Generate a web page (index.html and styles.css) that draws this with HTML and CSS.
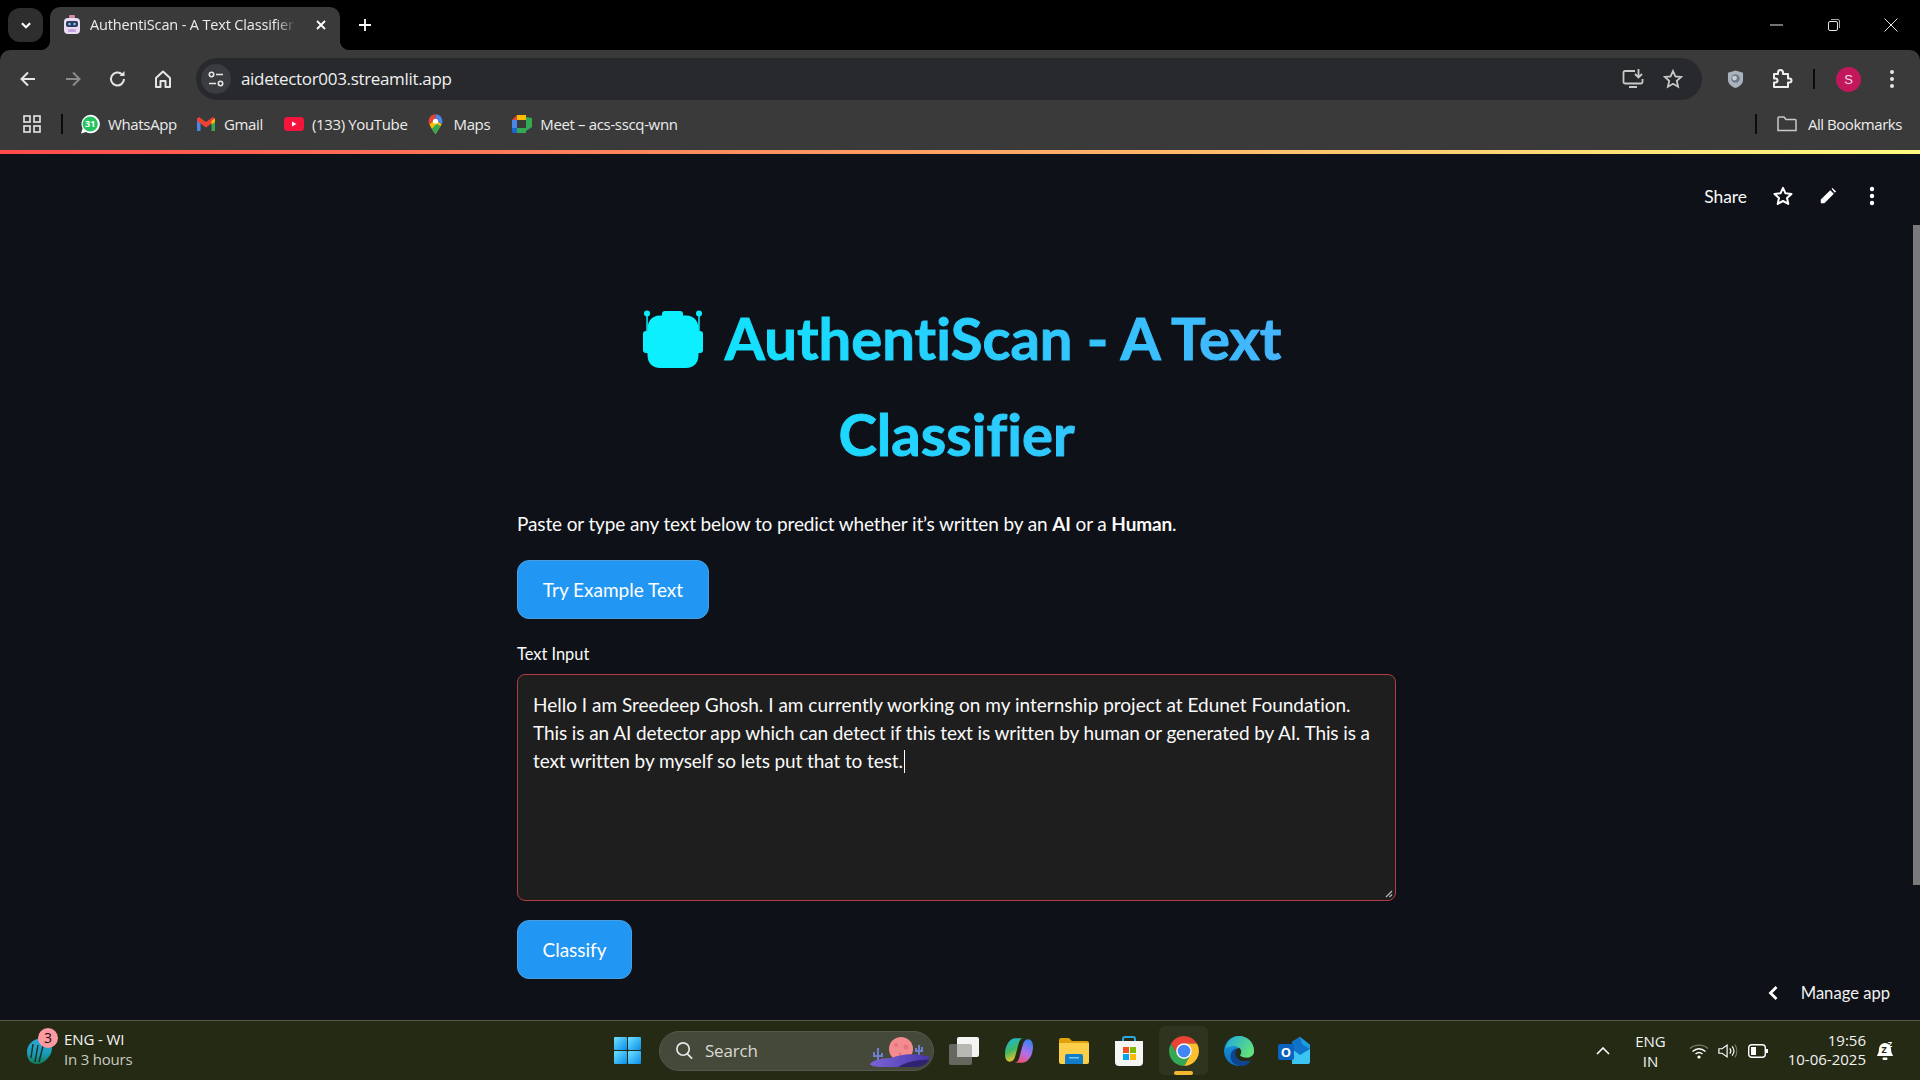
FILE: index.html
```html
<!DOCTYPE html>
<html lang="en">
<head>
<meta charset="utf-8">
<title>AuthentiScan - A Text Classifier</title>
<link rel="stylesheet" href="styles.css">
</head>
<body>
<div class="tabstrip">
  <div class="tabsearch"><svg viewBox="0 0 12 12" class="ic12"><path d="M2.5 4.5 6 8l3.5-3.5" fill="none" stroke="#fff" stroke-width="1.8"/></svg></div>
  <div class="tab">
    <svg class="favicon" viewBox="0 0 18 20"><rect x="6" y="0" width="6" height="3" rx="1" fill="#d98aa8"/><rect x="1" y="3" width="16" height="16" rx="4" fill="#e9dcf2"/><rect x="3" y="6" width="12" height="6" rx="2" fill="#2c3a5e"/><circle cx="6.5" cy="9" r="1.2" fill="#7fd0f5"/><circle cx="11.5" cy="9" r="1.2" fill="#7fd0f5"/><rect x="5" y="14" width="8" height="3" rx="1" fill="#c6a6e0"/></svg>
    <span class="tabtitle">AuthentiScan - A Text Classifier</span>
    <svg class="tabclose" viewBox="0 0 12 12"><path d="M2 2l8 8M10 2l-8 8" stroke="#fff" stroke-width="1.8"/></svg>
  </div>
  <svg class="newtab" viewBox="0 0 14 14"><path d="M7 1v12M1 7h12" stroke="#fff" stroke-width="1.8"/></svg>
  <div class="winctl">
    <svg viewBox="0 0 14 14" class="win"><path d="M0 7h13" stroke="#e6e6e6" stroke-width="1"/></svg>
    <svg viewBox="0 0 14 14" class="win"><rect x="1.5" y="3.5" width="9" height="9" rx="1.5" fill="none" stroke="#e6e6e6"/><path d="M4 1.5h7a1.5 1.5 0 0 1 1.5 1.5v7" fill="none" stroke="#aaa"/></svg>
    <svg viewBox="0 0 14 14" class="win"><path d="M.5.5l13 13M13.5.5l-13 13" stroke="#e6e6e6" stroke-width="1"/></svg>
  </div>
</div>

<div class="chrome">
  <div class="toolbar">
    <div class="navbtn"><svg viewBox="0 0 20 20" class="ic20"><path d="M17 10H4M10 3.5 3.5 10l6.500 6.500" fill="none" stroke="#e6e6e6" stroke-width="2"/></svg></div>
    <div class="navbtn"><svg viewBox="0 0 20 20" class="ic20"><path d="M3 10h13M10 3.500l6.500 6.500-6.500 6.500" fill="none" stroke="#8a8a8a" stroke-width="2"/></svg></div>
    <div class="navbtn"><svg viewBox="0 0 20 20" class="ic20"><path d="M16 10a6.500 6.500 0 1 1-2-4.700" fill="none" stroke="#e6e6e6" stroke-width="2"/><path d="M16.500 2v5h-5z" fill="#e6e6e6"/></svg></div>
    <div class="navbtn"><svg viewBox="0 0 20 20" class="ic20"><path d="M3 9 10 2.500 17 9v9h-4.500v-6h-5v6H3z" fill="none" stroke="#e6e6e6" stroke-width="2" stroke-linejoin="round"/></svg></div>
    <div class="omnibox">
      <div class="siteinfo"><svg viewBox="0 0 18 18" class="ic18"><circle cx="4.500" cy="4.500" r="2.200" fill="none" stroke="#e6e6e6" stroke-width="1.600"/><path d="M9 4.500h7M2 13.500h7" stroke="#e6e6e6" stroke-width="1.600"/><circle cx="13.500" cy="13.500" r="2.200" fill="none" stroke="#e6e6e6" stroke-width="1.600"/></svg></div>
      <span class="url">aidetector003.streamlit.app</span>
      <div class="omniright">
        <svg viewBox="0 0 22 20" class="ic22"><path d="M13 2H3a1.500 1.500 0 0 0-1.500 1.500V13A1.500 1.500 0 0 0 3 14.500h16a1.500 1.500 0 0 0 1.500-1.500V10" fill="none" stroke="#c9c9c9" stroke-width="1.800"/><path d="M7 18h8" stroke="#c9c9c9" stroke-width="2"/><path d="M16.500 0v8M13 5l3.500 3.500L20 5" fill="none" stroke="#c9c9c9" stroke-width="1.800"/></svg>
        <svg viewBox="0 0 20 20" class="ic20 star"><path d="M10 2l2.400 5.400 5.800.6-4.400 3.900 1.300 5.800L10 14.700l-5.100 3 1.300-5.800L1.800 8l5.800-.6z" fill="none" stroke="#c9c9c9" stroke-width="1.800"/></svg>
      </div>
    </div>
    <div class="tools">
      <svg viewBox="0 0 18 20" class="shield"><path d="M9 1l8 2.500v7c0 4.500-3.500 7.500-8 9-4.500-1.500-8-4.500-8-9v-7z" fill="#a9b2bd"/><circle cx="9" cy="9.500" r="4.500" fill="#6f7b88"/><circle cx="8" cy="9" r="2.500" fill="#c7ced6"/></svg>
      <svg viewBox="0 0 22 22" class="puzzle"><path d="M3 6h4V4.500a2.500 2.500 0 0 1 5 0V6h5v4.500h1.500a2 2 0 0 1 0 4H17V19H3v-4.500h1.500a2 2 0 0 0 0-4H3z" fill="none" stroke="#eee" stroke-width="2" stroke-linejoin="round"/></svg>
      <span class="sep"></span>
      <span class="avatar">S</span>
      <svg viewBox="0 0 6 20" class="dots"><circle cx="3" cy="3" r="2" fill="#e6e6e6"/><circle cx="3" cy="10" r="2" fill="#e6e6e6"/><circle cx="3" cy="17" r="2" fill="#e6e6e6"/></svg>
    </div>
  </div>
  <div class="bookmarks">
    <svg viewBox="0 0 18 18" class="apps"><g fill="none" stroke="#e6e6e6" stroke-width="1.600"><rect x="1" y="1" width="6" height="6"/><rect x="11" y="1" width="6" height="6"/><rect x="1" y="11" width="6" height="6"/><rect x="11" y="11" width="6" height="6"/></g></svg>
    <span class="sep first"></span>
    <svg viewBox="0 0 20 20" class="bm wa"><path d="M1 19.500l1.600-5A9.200 9.200 0 1 1 6 18z" fill="#fff"/><circle cx="10.200" cy="10" r="7.600" fill="#25c35f"/><text x="10.200" y="13.400" class="wa31">31</text></svg>
    <span class="bmtext w-wa">WhatsApp</span>
    <svg viewBox="0 0 20 16" class="bm gm"><path d="M1 15V2.500L4.500 5v10z" fill="#4a86e8"/><path d="M19 15V2.500L15.500 5v10z" fill="#34a853"/><path d="M1 2.500 3 1l7 5 7-5 2 1.500V5l-9 6.500L1 5z" fill="#ea4335"/><path d="M15.500 5 19 2.500V6l-3.500 2.500z" fill="#fbbc04"/></svg>
    <span class="bmtext w-gm">Gmail</span>
    <svg viewBox="0 0 20 14" class="bm yt"><rect width="20" height="14" rx="3.500" fill="#f5143c"/><path d="M8 4.500v5l4.500-2.500z" fill="#fff"/></svg>
    <span class="bmtext w-yt">(133) YouTube</span>
    <svg viewBox="0 0 16 22" class="bm mp"><path d="M8 0a7.500 7.500 0 0 1 6.500 11L8 5z" fill="#4a86e8"/><path d="M1.500 11A7.500 7.500 0 0 1 8 0v5z" fill="#e94335"/><path d="M1.500 11 8 5l6.500 6-1 1.500L8 21.500 4 15.500z" fill="#fbbc04"/><path d="M8 21.500 4 15.500 9 10.500l4.500 2z" fill="#34a853"/><circle cx="8" cy="7.500" r="2.700" fill="#fff"/></svg>
    <span class="bmtext w-mp">Maps</span>
    <svg viewBox="0 0 20 18" class="bm mt"><path d="M5 0h9v5H5z" fill="#fbbc04"/><path d="M0 5 5 0v5z" fill="#ea4335"/><path d="M0 5h5v8H0z" fill="#4a86e8"/><path d="M0 13h5v5H2a2 2 0 0 1-2-2z" fill="#1967d2"/><path d="M5 13h9v5H5z" fill="#34a853"/><path d="M14 2v14l6-4V3z" fill="#34a853"/><path d="M14 0v5h-3V1z" fill="#fbbc04"/><rect x="5" y="5" width="9" height="8" fill="#3a3a3a"/></svg>
    <span class="bmtext w-mt">Meet – acs-sscq-wnn</span>
    <span class="sep last"></span>
    <svg viewBox="0 0 20 16" class="folder"><path d="M1 14.500V2a1 1 0 0 1 1-1h5l2 2.500h9a1 1 0 0 1 1 1v10z" fill="none" stroke="#c9c9c9" stroke-width="1.500"/></svg>
    <span class="bmtext w-all">All Bookmarks</span>
  </div>
</div>
<div class="decoration"></div>

<main class="page">
  <div class="scrollarea">
    <div class="container">
      <h1 class="title"><svg class="robot" viewBox="0 0 60 60"><g fill="#0cefff"><circle cx="4" cy="4.500" r="3"/><circle cx="56" cy="4.500" r="3"/><rect x="3.300" y="6" width="1.500" height="20"/><rect x="55.200" y="6" width="1.500" height="20"/><rect x="19" y="2" width="21" height="7" rx="3"/><rect x="0" y="22" width="60" height="22" rx="3"/><path d="M17 6.500h26C52 6.500 55.500 13 55.500 20v26c0 8-5 13-12.500 13H17C9.500 59 4.500 54 4.500 46V20C4.500 13 8 6.500 17 6.500z"/></g></svg>AuthentiScan - A Text<br>Classifier</h1>
      <p class="lead">Paste or type any text below to predict whether it’s written by an <strong>AI</strong> or a <strong>Human</strong>.</p>
      <button class="btn btn-example">Try Example Text</button>
      <label class="label">Text Input</label>
      <div class="textarea"><span class="line1">Hello I am Sreedeep Ghosh. I am currently working on my internship project at Edunet Foundation.</span><br>This is an AI detector app which can detect if this text is written by human or generated by AI. This is a<br>text written by myself so lets put that to test.<span class="caret"></span>
        <svg class="grip" viewBox="0 0 10 10"><path d="M9 3 3 9M9 6.500 6.500 9" stroke="#bbb" stroke-width="1.200"/></svg>
      </div>
      <button class="btn btn-classify">Classify</button>
    </div>
  </div>
  <div class="scrollbar"><div class="thumb"></div></div>
  <div class="apptools">
    <span class="share">Share</span>
    <svg viewBox="0 0 20 20" class="ic20 apptool"><path d="M10 1.800l2.500 5.500 6 .7-4.500 4 1.300 5.900L10 15l-5.300 2.900L6 12 1.500 8l6-.7z" fill="none" stroke="#fff" stroke-width="2" stroke-linejoin="round"/></svg>
    <svg viewBox="0 0 20 20" class="ic18 apptool pencil"><path d="M2 18v-4L12.500 3.500l4 4L6 18zM14 2l1-1 4 4-1.500 1.500z" fill="#fff"/></svg>
    <svg viewBox="0 0 6 20" class="dots apptool lastdots"><circle cx="3" cy="3" r="2.200" fill="#fff"/><circle cx="3" cy="10" r="2.200" fill="#fff"/><circle cx="3" cy="17" r="2.200" fill="#fff"/></svg>
  </div>
  <div class="manage">
    <svg viewBox="0 0 12 16" class="manageic"><path d="M9.500 2 3.500 8l6 6" fill="none" stroke="#fff" stroke-width="2.800"/></svg>
    <span class="managetext">Manage app</span>
  </div>
</main>

<footer class="taskbar">
  <div class="tb-left">
    <div class="weather">
      <svg viewBox="0 0 25 27" class="wic"><defs><linearGradient id="wg" x1="0" y1="0" x2="0" y2="1"><stop offset="0" stop-color="#2aa9d6"/><stop offset=".6" stop-color="#1a9db8"/><stop offset="1" stop-color="#0f7a55"/></linearGradient></defs><path d="M10 2C17 -1 25 3 25 11 25 19 17 27 10 27 3 27 0 22 0 15 0 9 4 4 10 2z" fill="url(#wg)"/><path d="M6 7 4 21M11 8 8 25M16 9l-4 16" stroke="#1c2a20" stroke-width="1.400" fill="none"/></svg>
      <span class="badge">3</span>
    </div>
    <div class="wtext"><span class="w1">ENG - WI</span><span class="w2">In 3 hours</span></div>
  </div>
  <div class="tb-center">
    <svg viewBox="0 0 27 27" class="start"><defs><linearGradient id="sg" x1="0" y1="0" x2="1" y2="1"><stop offset="0" stop-color="#6fe3ff"/><stop offset="1" stop-color="#0a8dea"/></linearGradient></defs><g fill="url(#sg)"><rect width="13" height="13" rx="1"/><rect x="14" width="13" height="13" rx="1"/><rect y="14" width="13" height="13" rx="1"/><rect x="14" y="14" width="13" height="13" rx="1"/></g></svg>
    <div class="search">
      <svg viewBox="0 0 20 20" class="sic"><circle cx="8.500" cy="8.500" r="6.500" fill="none" stroke="#e6e6e6" stroke-width="1.800"/><path d="M13 13.500l5 5" stroke="#e6e6e6" stroke-width="2"/></svg>
      <span class="searchtext">Search</span>
      <svg viewBox="0 0 62 36" class="scene"><defs><linearGradient id="hl" x1="0" y1="0" x2="1" y2="0"><stop offset="0" stop-color="#7a63d6"/><stop offset="1" stop-color="#4a36a8"/></linearGradient></defs><path d="M10 15v12M6 19v4h4M14 20v3h-4" fill="none" stroke="#6f7fd0" stroke-width="2"/><path d="M51 12v10M48 15v3h3M54 14v4h-3" fill="none" stroke="#6f7fd0" stroke-width="2"/><circle cx="33" cy="16" r="12" fill="#f48b8f"/><circle cx="28" cy="12" r="2" fill="#e2757f"/><circle cx="38" cy="14" r="2.500" fill="#e2757f"/><circle cx="32" cy="21" r="1.500" fill="#e2757f"/><path d="M2 31c4-5 14-6 22-6 6-3 22-6 38-1-1 6-8 10-14 10H14C8 34 2 33 2 31z" fill="url(#hl)"/><path d="M30 34c8-5 22-8 31-7-2 4-7 7-13 7z" fill="#2f2370"/></svg>
    </div>
    <div class="tbicon">
      <svg viewBox="0 0 30 28" class="i30"><rect x="0" y="7" width="23" height="21" rx="2" fill="#666860"/><rect x="8" y="0" width="22" height="20" rx="2" fill="#f4f4f4"/><path d="M8 7h13a2 2 0 0 1 2 2v11H8z" fill="#b7b8b4"/></svg>
    </div>
    <div class="tbicon">
      <svg viewBox="0 0 30 28" class="i28"><defs><linearGradient id="c1" x1="0" y1="0" x2=".4" y2="1"><stop offset="0" stop-color="#18b8ee"/><stop offset=".55" stop-color="#3fb764"/><stop offset="1" stop-color="#f6c426"/></linearGradient><linearGradient id="c2" x1=".6" y1="0" x2=".2" y2="1"><stop offset="0" stop-color="#3f80f2"/><stop offset=".5" stop-color="#b070ee"/><stop offset="1" stop-color="#f2506a"/></linearGradient></defs><path d="M11 1h9c-3 0-4.500 2-5.500 6L11 20c-1 4-3 6-6 6-3 0-5-3-5-8C0 9 5 1 11 1z" fill="url(#c1)"/><path d="M19 27h-9c3 0 4.500-2 5.500-6L19 8c1-4 3-6 6-6 3 0 5 3 5 8 0 9-5 17-11 17z" fill="url(#c2)"/></svg>
    </div>
    <div class="tbicon">
      <svg viewBox="0 0 30 26" class="i30"><path d="M0 2a2 2 0 0 1 2-2h8l3 3h15a2 2 0 0 1 2 2v4H0z" fill="#e0a20c"/><path d="M0 5h30v19a2 2 0 0 1-2 2H2a2 2 0 0 1-2-2z" fill="#fccf4a"/><path d="M6 18a2 2 0 0 1 2-2h14a2 2 0 0 1 2 2v8H6z" fill="#0f7dc9"/><rect x="10" y="19" width="10" height="1.500" fill="#7cc6f2"/></svg>
    </div>
    <div class="tbicon">
      <svg viewBox="0 0 30 30" class="i30"><path d="M9 7V3a2 2 0 0 1 2-2h8a2 2 0 0 1 2 2v4" fill="none" stroke="#2ba8e0" stroke-width="2"/><path d="M1 5h28v21a4 4 0 0 1-4 4H5a4 4 0 0 1-4-4z" fill="#f5f5f5"/><rect x="9" y="11" width="6" height="6" fill="#f25022"/><rect x="16" y="11" width="6" height="6" fill="#7fba00"/><rect x="9" y="18" width="6" height="6" fill="#00a4ef"/><rect x="16" y="18" width="6" height="6" fill="#ffb900"/></svg>
    </div>
    <div class="tbicon active">
      <svg viewBox="4 4 40 40" class="i30"><path d="M6.680 14A20 20 0 0 1 41.320 14H24a10 10 0 0 0-8.660 15z" fill="#ea4335"/><path d="M41.320 14A20 20 0 0 1 24 44L32.660 29A10 10 0 0 0 24 14z" fill="#fbc02d"/><path d="M24 44A20 20 0 0 1 6.680 14L15.340 29A10 10 0 0 0 32.660 29z" fill="#34a853"/><circle cx="24" cy="24" r="10.500" fill="#fff"/><circle cx="24" cy="24" r="8.500" fill="#4285f4"/></svg>
      <span class="indicator"></span>
    </div>
    <div class="tbicon">
      <svg viewBox="0 0 32 32" class="i30"><defs><linearGradient id="e1" x1="0" y1="0" x2="1" y2=".6"><stop offset="0" stop-color="#1fa7e0"/><stop offset="1" stop-color="#63e27a"/></linearGradient><linearGradient id="e2" x1="0" y1="0" x2="0" y2="1"><stop offset="0" stop-color="#1a9fe0"/><stop offset="1" stop-color="#0f6cc0"/></linearGradient></defs><path d="M16 0A16 16 0 1 0 28.500 26C24 28 18 28 14 24 10 20 11 15 15 13 17 12 19 13 19 15.500L24 23C29 23 32 20 32 16 32 7 25 0 16 0z" fill="url(#e2)"/><path d="M15 13c-4 0-8 3-8 9 0 5 5 10 12 10 4 0 7-2 9.500-6-5 2-11.500 2-14.500-2-3-4-2-9 1-11z" fill="#0c4490"/><path d="M16 0c9 0 16 7 16 16 0 4.500-3 7-8 7-3 0-6-1-7-2.500 2-2 2-6-1-8-4-3-11-2-14 1C3.500 5 9 0 16 0z" fill="url(#e1)"/></svg>
    </div>
    <div class="tbicon">
      <svg viewBox="0 0 32 27" class="i32"><path d="M14 5 22 0 32 8V25a2 2 0 0 1-2 2H14z" fill="#3cc4f2"/><path d="M14 5 22 0 32 8V12L22 18 14 12z" fill="#0f73c9"/><path d="M22 0 32 8V12L24 7z" fill="#1e9be0"/><rect x="0" y="7" width="16" height="16" rx="2" fill="#0a63c0"/><text x="8" y="20" class="olo">O</text></svg>
    </div>
  </div>
  <div class="tb-right">
    <svg viewBox="0 0 14 8" class="trayup"><path d="M1 7l6-6 6 6" fill="none" stroke="#fff" stroke-width="1.600"/></svg>
    <div class="lang"><span>ENG</span><span>IN</span></div>
    <svg viewBox="0 0 20 16" class="wifi"><path d="M1 5.500C6 1 14 1 19 5.500" fill="none" stroke="#777a6c" stroke-width="1.400"/><path d="M3.500 8.500c4-3.500 9-3.500 13 0M6.500 11c2-1.700 5-1.700 7 0" fill="none" stroke="#fff" stroke-width="1.400"/><circle cx="10" cy="14" r="1.600" fill="#fff"/></svg>
    <svg viewBox="0 0 22 16" class="vol"><path d="M1 5.500h3.500L10 1.500v13l-5.500-4H1z" fill="none" stroke="#fff" stroke-width="1.300"/><path d="M13 5c1.500 2 1.500 4 0 6M15.500 3c2.500 3 2.500 7 0 10" fill="none" stroke="#fff" stroke-width="1.300"/><path d="M18.500 1c3 4 3 10 0 14" fill="none" stroke="#777a6c" stroke-width="1.200"/></svg>
    <svg viewBox="0 0 20 14" class="batt"><rect x=".7" y=".7" width="16.600" height="12.600" rx="3" fill="none" stroke="#fff" stroke-width="1.400"/><rect x="3" y="3" width="5" height="8" fill="#fff"/><rect x="18" y="5" width="2" height="4" fill="#fff"/></svg>
    <div class="clock"><span>19:56</span><span>10-06-2025</span></div>
    <svg viewBox="0 0 18 20" class="bell"><path d="M9 2a6 6 0 0 1 6 6c0 4 2 6 2 7H1c0-1 2-3 2-7a6 6 0 0 1 6-6z" fill="#fff"/><rect x="6.500" y="16.500" width="5" height="2.500" rx="1.200" fill="#fff"/><text x="8" y="12" class="zz">Z</text><text x="14" y="6" class="zz2">Z</text></svg>
  </div>
</footer>
</body>
</html>
```

FILE: styles.css
```css
* { box-sizing: border-box; }
html, body { margin: 0; height: 100%; }
body {
  width: 1920px; height: 1080px; overflow: hidden;
  display: flex; flex-direction: column;
  background: #000; color: #fff;
  font-family: "Open Sans", "Noto Sans", sans-serif;
}
svg { display: block; flex: none; }
.ic12 { width: 14px; height: 14px; }
.ic18 { width: 18px; height: 18px; }
.ic20 { width: 20px; height: 20px; }
.ic22 { width: 22px; height: 20px; }

/* tab strip */
.tabstrip { height: 50px; display: flex; align-items: flex-start; background: #000; flex: none; }
.tabsearch { width: 35px; height: 34px; margin: 8px 0 0 8px; background: #2e2e2e; border-radius: 12px; display: flex; align-items: center; justify-content: center; }
.tab { position: relative; width: 290px; height: 43px; margin: 7px 0 0 7px; background: #3a3a3a; border-radius: 10px 10px 0 0; display: flex; align-items: center; padding: 0 0 8px 13px; }
.tab::before, .tab::after { content: ""; position: absolute; bottom: 0; width: 10px; height: 10px; }
.tab::before { left: -10px; background: radial-gradient(circle at 0 0, #000 10px, #3a3a3a 10.5px); }
.tab::after { right: -10px; background: radial-gradient(circle at 100% 0, #000 10px, #3a3a3a 10.5px); }
.favicon { width: 18px; height: 20px; }
.tabtitle { margin-left: 9px; width: 206px; overflow: hidden; white-space: nowrap; font-family: "Open Sans", sans-serif; font-size: 14.5px; letter-spacing: -.15px; color: #ececec; -webkit-mask-image: linear-gradient(90deg, #000 90%, transparent); mask-image: linear-gradient(90deg, #000 90%, transparent); }
.tabclose { width: 12px; height: 12px; margin-left: 19px; }
.newtab { width: 14px; height: 14px; margin: 18px 0 0 18px; }
.winctl { margin-left: auto; display: flex; align-items: flex-start; padding: 18px 22px 0 0; gap: 43px; }
.win { width: 14px; height: 14px; }

/* toolbar */
.chrome { background: #3a3a3a; height: 100px; flex: none; border-radius: 10px 10px 0 0; display: flex; flex-direction: column; }
.toolbar { height: 50px; padding: 8px 0 0 5px; display: flex; align-items: flex-start; flex: none; }
.navbtn { width: 45px; height: 42px; display: flex; align-items: center; justify-content: center; }
.omnibox { margin-left: 11px; width: 1506px; height: 42px; border-radius: 21px; background: #27292c; display: flex; align-items: center; padding: 0 19px 0 5px; }
.siteinfo { width: 30px; height: 30px; border-radius: 50%; background: #3a3c3f; display: flex; align-items: center; justify-content: center; }
.url { margin-left: 10px; padding-bottom: 1px; font-size: 17px; letter-spacing: -.33px; color: #f0f0f0; }
.omniright { margin-left: auto; display: flex; align-items: center; gap: 19px; }
.star { width: 20px; height: 20px; }
.tools { display: flex; align-items: center; height: 42px; flex: 1; padding-left: 25px; }
.shield { width: 17px; height: 20px; }
.puzzle { width: 22px; height: 22px; margin-left: 27px; }
.sep { width: 2px; height: 20px; background: #0b0b0b; }
.tools .sep { margin-left: 20px; }
.avatar { width: 25px; height: 25px; margin-left: 21px; border-radius: 50%; background: #c2185b; color: #f5dbe5; font: 13px "Liberation Sans", sans-serif; display: flex; align-items: center; justify-content: center; }
.dots { width: 6px; height: 20px; }
.tools .dots { margin-left: 28px; }

.bookmarks { height: 50px; display: flex; align-items: center; padding: 0 0 2px 23px; }
.apps { width: 18px; height: 18px; }
.sep.first { margin-left: 20px; }
.sep.last { margin-left: auto; }
.bm { width: 20px; }
.wa { height: 20px; margin-left: 17px; }
.wa31 { font: bold 9px "Open Sans", sans-serif; fill: #fff; text-anchor: middle; }
.gm { height: 16px; margin-left: 19px; }
.yt { height: 14px; margin-left: 21px; }
.mp { width: 15px; height: 21px; margin-left: 21px; }
.mt { height: 18px; margin-left: 22px; }
.bmtext { margin-left: 8px; font-size: 15px; color: #ececec; white-space: nowrap; letter-spacing: -.35px; }
.mp + .bmtext { margin-left: 10px; }
.folder { width: 20px; height: 16px; margin-left: 20px; }
.w-all { margin-left: 11px; margin-right: 18px; letter-spacing: -.45px; }

.decoration { height: 4px; flex: none; background: linear-gradient(90deg, #ff4b4b, #fffd80); }

/* streamlit page */
.page { position: relative; flex: 1; display: flex; background: #0e1117; overflow: hidden; font-family: Lato, "Open Sans", sans-serif; font-variant-ligatures: none; min-height: 0; }
.scrollarea { flex: 1; display: flex; justify-content: center; }
.container { width: 879px; padding-top: 136px; }
.title { margin: 0; font-size: 58px; line-height: 96px; font-weight: 700; text-align: center; background: linear-gradient(90deg, #00f2fe, #4facfe); -webkit-background-clip: text; background-clip: text; color: transparent; -webkit-text-stroke: 1px transparent; }
.robot { display: inline-block; width: 60px; height: 60px; vertical-align: -9px; margin: 0 22px 0 11px; }
.lead { margin: 28px 0 0; font-size: 19px; letter-spacing: -.13px; line-height: 28px; color: #fafafa; }
.lead strong { font-weight: 700; }
.btn { display: block; height: 59px; border: 1px solid #4a9fe0; border-radius: 12px; background: #2196f3; color: #fff; font: inherit; font-size: 19px; }
.btn-example { width: 192px; margin-top: 22px; }
.label { display: block; margin-top: 24px; height: 31px; font-size: 16.4px; line-height: 22px; color: #fafafa; }
.textarea { position: relative; height: 227px; border: 1px solid #b23c42; border-radius: 8px; background: #1e1e1e; padding: 16px 15px; font-size: 19px; letter-spacing: -.1px; line-height: 28px; color: #fafafa; white-space: nowrap; }
.line1 { letter-spacing: 0; }
.caret { display: inline-block; width: 1px; height: 23px; background: #fff; vertical-align: -5px; margin-left: 1px; }
.grip { position: absolute; right: 2px; bottom: 2px; width: 10px; height: 10px; }
.btn-classify { width: 115px; margin-top: 19px; }
.scrollbar { width: 7px; flex: none; padding-top: 71px; }
.thumb { height: 660px; background: #7a7a7a; }
.apptools { position: absolute; top: 31px; right: 45px; display: flex; align-items: center; height: 22px; }
.share { font-size: 17.4px; color: #fafafa; }
.apptool { margin-left: 26px; }
.pencil { margin-left: 26px; }
.lastdots { margin-left: 32px; }
.manage { position: absolute; right: 30px; bottom: 17px; display: flex; align-items: center; }
.manageic { width: 12px; height: 16px; }
.managetext { margin-left: 22px; font-size: 16.6px; color: #f0f0f0; }

/* taskbar */
.taskbar { height: 60px; flex: none; background: #252a14; border-top: 1px solid #55584a; display: grid; grid-template-columns: 614px 1fr auto; align-items: center; font-family: "Open Sans", sans-serif; }
.tb-left { display: flex; align-items: center; padding-left: 27px; }
.weather { position: relative; width: 28px; height: 27px; }
.wic { width: 25px; height: 27px; }
.badge { position: absolute; top: -9px; left: 11px; width: 20px; height: 20px; border-radius: 50%; background: #ff9aa2; color: #111; font-size: 14px; line-height: 20px; text-align: center; }
.wtext { margin-left: 9px; display: flex; flex-direction: column; line-height: 20px; padding-bottom: 3px; }
.w1 { font-size: 15px; letter-spacing: -.1px; color: #f4f4f4; }
.w2 { font-size: 15px; letter-spacing: -.2px; color: #c9cbc3; }
.tb-center { display: flex; align-items: center; height: 100%; }
.start { width: 27px; height: 27px; margin-right: 18px; }
.search { width: 275px; height: 40px; margin-right: 2px; border-radius: 20px; background: #45493a; border: 1px solid #54584a; display: flex; align-items: center; padding-left: 15px; }
.sic { width: 19px; height: 19px; }
.searchtext { margin-left: 11px; font-size: 17px; letter-spacing: -.2px; color: #d9dad4; }
.scene { width: 62px; height: 36px; margin-left: auto; margin-right: 3px; }
.tbicon { position: relative; width: 55px; height: 49px; display: flex; align-items: center; justify-content: center; }
.i30 { width: 30px; height: 30px; }
.i28 { width: 28px; height: 27px; }
.i32 { width: 32px; height: 27px; }
.active { background: #2f3420; border-radius: 6px; width: 49px; margin: 0 3px; }
.indicator { position: absolute; left: 15px; bottom: 0; width: 19px; height: 4px; border-radius: 2px; background: #f7b731; }
.olo { font: bold 13px "Open Sans", sans-serif; fill: #fff; text-anchor: middle; }
.tb-right { display: flex; align-items: center; padding-right: 26px; font-size: 15px; color: #f2f2f2; }
.trayup { width: 14px; height: 8px; }
.lang { width: 50px; margin-left: 15.5px; display: flex; flex-direction: column; align-items: center; line-height: 20px; }
.wifi { width: 20px; height: 16px; margin-left: 13px; }
.vol { width: 20px; height: 16px; margin-left: 9px; }
.batt { width: 20px; height: 14px; margin-left: 10.5px; }
.clock { width: 98px; margin-left: 0; display: flex; flex-direction: column; align-items: flex-end; line-height: 19px; padding-bottom: 2px; }
.bell { width: 18px; height: 20px; margin-left: 10px; }
.zz { font: bold 9px "Open Sans", sans-serif; fill: #252a14; text-anchor: middle; }
.zz2 { font: bold 7px "Open Sans", sans-serif; fill: #fff; text-anchor: middle; }
```
